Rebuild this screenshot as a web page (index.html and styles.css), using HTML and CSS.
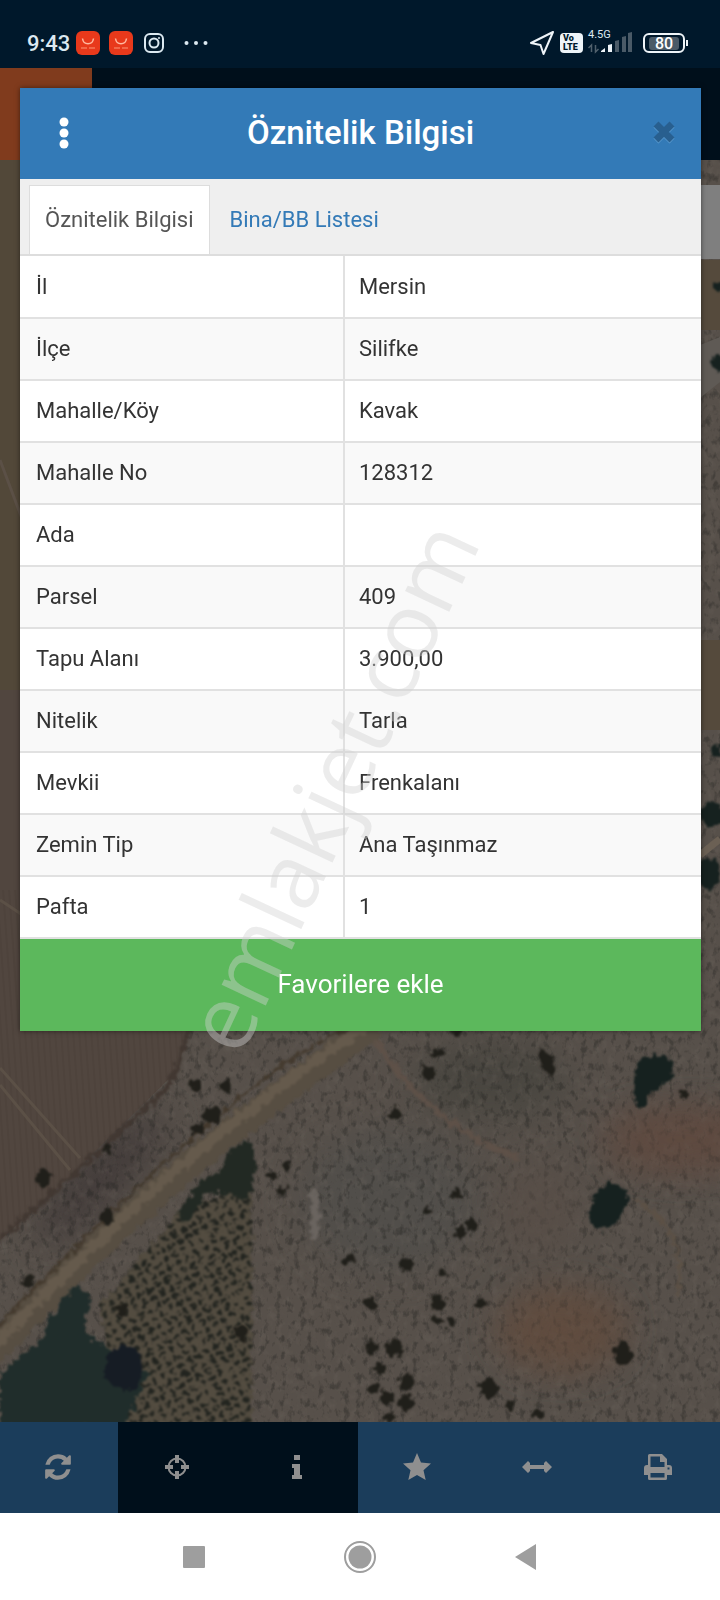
FILE: index.html
```html
<!DOCTYPE html>
<html lang="tr">
<head>
    <meta charset="UTF-8">
    <meta name="viewport" content="width=device-width, initial-scale=1.0">
    <title>Öznitelik Bilgisi</title>
    <link rel="stylesheet" href="styles.css">
</head>
<body>
    <div class="status-bar">
        <div class="status-left">
            <span class="clock">9:43</span>
            <svg class="app-icon" viewBox="0 0 24 24" width="24" height="24">
                <rect width="24" height="24" rx="6" fill="#e8391b"/>
                <path d="M6.500 7.500c1 7 10 7 11 0" fill="none" stroke="#ffb9a0" stroke-width="1.500"/>
                <path d="M5 17h6M13 17h6" stroke="#f5785a" stroke-width="1.500"/>
            </svg>
            <svg class="app-icon" viewBox="0 0 24 24" width="24" height="24">
                <rect width="24" height="24" rx="6" fill="#e8391b"/>
                <path d="M6.500 7.500c1 7 10 7 11 0" fill="none" stroke="#ffb9a0" stroke-width="1.500"/>
                <path d="M5 17h6M13 17h6" stroke="#f5785a" stroke-width="1.500"/>
            </svg>
            <svg class="camera-icon" viewBox="0 0 20 20" width="20" height="20" fill="none" stroke="#dce9f1" stroke-width="2">
                <rect x="1" y="1" width="18" height="18" rx="5"/>
                <circle cx="10" cy="10" r="4.500"/>
                <circle cx="15" cy="5" r="1" fill="#dce9f1" stroke="none"/>
            </svg>
            <svg class="dots-icon" viewBox="0 0 24 6" width="24" height="6" fill="#dce9f1">
                <circle cx="2.500" cy="3" r="2"/><circle cx="12" cy="3" r="2"/><circle cx="21.500" cy="3" r="2"/>
            </svg>
        </div>
        <div class="status-right">
            <svg viewBox="0 0 26 26" width="26" height="26" fill="none" stroke="#eef4f8" stroke-width="2" stroke-linejoin="round">
                <path d="M24 2L2 13l9.500 2 3 9z"/>
            </svg>
            <div class="volte"><span>Vo</span><span>LTE</span></div>
            <div class="signal">
                <span class="network">4.5G</span>
                <svg viewBox="0 0 46 22" width="46" height="22">
                    <path d="M3.500 20v-7l-3 3M7.500 13v7l3-3" fill="none" stroke="#51616d" stroke-width="1.500"/>
                    <path d="M13 20h4v-4l-4 3zM20 20h4v-8l-4 1z" fill="#eef4f8"/>
                    <path d="M27 20h4V8l-4 1zM34 20h4V4l-4 1zM40 20h4V0l-4 1z" fill="#4a5a67"/>
                </svg>
            </div>
            <div class="battery"><span>80</span></div>
        </div>
    </div>

    <div class="app">
        <header class="app-header"><div class="menu-tile"></div></header>

        <main class="map">
            <svg class="map-image" viewBox="0 160 720 1262" preserveAspectRatio="xMidYMax slice" color-interpolation-filters="sRGB">
                <defs>
                    <filter id="speckle" x="0" y="0" width="1" height="1">
                        <feTurbulence type="fractalNoise" baseFrequency="0.16 0.11" numOctaves="3" seed="8"/>
                        <feColorMatrix values="0 0 0 0 .14  0 0 0 0 .14  0 0 0 0 .13  4 0 0 0 -2.100"/>
                    </filter>
                    <filter id="haze" x="0" y="0" width="1" height="1">
                        <feTurbulence type="fractalNoise" baseFrequency="0.12 0.09" numOctaves="3" seed="3"/>
                        <feColorMatrix values="0 0 0 0 .46  0 0 0 0 .43  0 0 0 0 .4  0 3 0 0 -1.400"/>
                    </filter>
                    <filter id="rough" x="-.2" y="-.2" width="1.400" height="1.400">
                        <feTurbulence type="fractalNoise" baseFrequency="0.15" numOctaves="2" seed="5"/>
                        <feDisplacementMap in="SourceGraphic" scale="12" xChannelSelector="R" yChannelSelector="G"/>
                        <feGaussianBlur stdDeviation="1.200"/>
                    </filter>
                    <filter id="soft" x="-.5" y="-.5" width="2" height="2">
                        <feGaussianBlur stdDeviation="18"/>
                    </filter>
                    <pattern id="furrows" width="6" height="6" patternUnits="userSpaceOnUse" patternTransform="rotate(-4)">
                        <path d="M1 0v6" stroke="#463c35" stroke-width="1.500"/>
                    </pattern>
                    <pattern id="orchard" width="10" height="9" patternUnits="userSpaceOnUse" patternTransform="rotate(-30)">
                        <ellipse cx="4" cy="4" rx="3" ry="2.800" fill="#1c1f1b"/>
                    </pattern>
                </defs>
                <rect y="160" width="720" height="1262" fill="#57504a"/>
                <!-- soil patches -->
                <g filter="url(#soft)">
                    <ellipse cx="560" cy="1330" rx="60" ry="36" fill="#604c3f"/>
                    <ellipse cx="690" cy="1140" rx="80" ry="26" fill="#604a40"/>
                    <ellipse cx="390" cy="1200" rx="90" ry="70" fill="#514e4a"/>
                    <ellipse cx="100" cy="1180" rx="90" ry="22" fill="#403938" transform="rotate(-45 100 1180)"/>
                    <ellipse cx="490" cy="1080" rx="80" ry="40" fill="#494640"/>
                </g>
                <rect y="160" width="720" height="1262" filter="url(#haze)" opacity=".2"/>
                <rect y="160" width="720" height="1262" filter="url(#speckle)" opacity=".38"/>
                <!-- calmer ground between the shrubs -->
                <g filter="url(#soft)" opacity=".6">
                    <ellipse cx="565" cy="1330" rx="60" ry="40" fill="#604c3f"/>
                    <ellipse cx="680" cy="1140" rx="80" ry="30" fill="#5e4a40"/>
                    <ellipse cx="540" cy="1210" rx="40" ry="50" fill="#584d46"/>
                </g>
                <!-- fields -->
                <path d="M0 160h30v530H0z" fill="#524839"/>
                <path d="M0 690h30v330h160l-12 50-110 108L0 1240z" fill="#51463f"/>
                <path d="M0 890h30v130h160l-12 50-110 108L0 1240z" fill="url(#furrows)" opacity=".45"/>
                <path d="M0 460l30 80M0 900l30 20M0 1068l80 90M0 1085l70 85" stroke="#5b5046" stroke-width="3" fill="none"/>
                <path d="M700 260h20v70h-20zM700 640h20v90h-20z" fill="#554a3c"/>
                <path d="M700 345l20-8v45l-20 16z" fill="#5f5a55"/>
                <path d="M700 855l20-16" stroke="#6b6054" stroke-width="7"/>
                <!-- tracks -->
                <g fill="none" filter="url(#rough)">
                    <path d="M190 1020q-10 60-40 85L0 1240" stroke="#423832" stroke-width="5"/>
                    <path d="M-10 1354Q140 1200 235 1128T375 1025" stroke="#574e42" stroke-width="27"/>
                    <path d="M-10 1350Q135 1199 230 1125T368 1025" stroke="#655a4c" stroke-width="11"/>
                    <path d="M-10 1335Q125 1193 222 1113T350 1030" stroke="#443a2e" stroke-width="3"/>
                    <path d="M375 1040q40 60 80 85t65 34" stroke="#5e5148" stroke-width="6"/>
                    <path d="M635 1200q55 30 42 95" stroke="#5c5146" stroke-width="4"/>
                    <path d="M312 1190q6 20 2 50" stroke="#6a645f" stroke-width="8"/>
                </g>
                <!-- orchard and wood -->
                <g filter="url(#rough)">
                    <path d="M178 1212l74-28v248H120l-20-126z" fill="#534c40"/>
                    <path d="M178 1212l74-28v248H120l-20-126z" fill="url(#orchard)" opacity=".9"/>
                    <path d="M178 1215l22-34 20-8 6-18 18-15 12 10-2 32-10 20-12-8-25-2-14 22-8 10z" fill="#222923"/>
                    <path d="M0 1372l18-12 22-20 22-42 16-14 12 12-6 36 34 24 32 16-26 54H0z" fill="#202d2b"/>
                    <ellipse cx="124" cy="1368" rx="19" ry="22" fill="#161c24"/>
                </g>
                <!-- single trees -->
                <g fill="#201f1a" filter="url(#rough)">
                    <circle cx="197" cy="1085" r="6"/><circle cx="225" cy="1086" r="6"/>
                    <ellipse cx="211" cy="1115" rx="11" ry="8"/><circle cx="197" cy="1129" r="6"/>
                    <circle cx="107" cy="1147" r="5"/><circle cx="44" cy="1179" r="8"/>
                    <circle cx="106" cy="1217" r="7"/><circle cx="28" cy="1282" r="6"/>
                    <circle cx="272" cy="1176" r="5"/><circle cx="282" cy="1190" r="5"/><circle cx="287" cy="1167" r="5"/>
                    <circle cx="241" cy="1333" r="7"/><circle cx="122" cy="1310" r="7"/>
                    <circle cx="429" cy="1073" r="7"/><circle cx="438" cy="1053" r="5"/><circle cx="395" cy="1113" r="6"/>
                    <path d="M538 1048l14 8 5 16-6 5-10-12z"/>
                    <circle cx="349" cy="1260" r="6"/><circle cx="406" cy="1265" r="7"/><circle cx="370" cy="1302" r="6"/>
                    <circle cx="461" cy="1233" r="6"/><circle cx="472" cy="1223" r="5"/><circle cx="427" cy="1211" r="5"/>
                    <circle cx="456" cy="1194" r="5"/><circle cx="438" cy="1303" r="8"/><circle cx="436" cy="1320" r="5"/>
                    <circle cx="452" cy="1323" r="5"/><circle cx="480" cy="1304" r="5"/><circle cx="442" cy="1272" r="4"/>
                    <circle cx="372" cy="1347" r="7"/><circle cx="394" cy="1348" r="9"/><circle cx="380" cy="1368" r="6"/>
                    <circle cx="374" cy="1388" r="6"/><circle cx="406" cy="1382" r="8"/><circle cx="387" cy="1398" r="7"/>
                    <circle cx="406" cy="1403" r="8"/><circle cx="390" cy="1417" r="5"/><circle cx="489" cy="1388" r="10"/>
                    <circle cx="623" cy="1353" r="10"/><circle cx="537" cy="1413" r="5"/><circle cx="510" cy="1405" r="5"/>
                    <circle cx="684" cy="1095" r="5"/><circle cx="457" cy="1032" r="5"/>
                    <g fill="#16211f">
                        <path d="M636 1066l8-9 10-4 16 4 4 12-4 10-12 9-8 2-2 14-10 6-4-10z"/>
                        <path d="M592 1200l8-12 12-5 14 6 2 12-6 14-12 10-10 6-12-12z"/>
                        <ellipse cx="712" cy="814" rx="12" ry="13"/><ellipse cx="708" cy="874" rx="12" ry="16"/>
                        <ellipse cx="718" cy="286" rx="5" ry="5"/><ellipse cx="718" cy="364" rx="7" ry="8"/>
                        <ellipse cx="716" cy="750" rx="6" ry="6"/>
                    </g>
                </g>
            </svg>
            <div class="map-control"></div>
        </main>

        <nav class="toolbar">
            <button type="button" aria-label="Yenile">
                <svg viewBox="0 0 1792 1792" width="30" height="30"><path d="M1639 1056q0 5-1 7-64 268-268 434.500t-478 166.500q-146 0-282.500-55t-243.500-157l-129 129q-19 19-45 19t-45-19-19-45v-448q0-26 19-45t45-19h448q26 0 45 19t19 45-19 45l-137 137q71 66 161 102t187 36q134 0 250-65t186-179q11-17 53-117 8-23 30-23h192q13 0 22.500 9.500t9.500 22.500zm25-800v448q0 26-19 45t-45 19h-448q-26 0-45-19t-19-45 19-45l138-138q-148-137-349-137-134 0-250 65t-186 179q-11 17-53 117-8 23-30 23h-199q-13 0-22.500-9.500t-9.500-22.500v-7q65-268 270-434.500t480-166.500q146 0 284 55.500t245 156.500l130-129q19-19 45-19t45 19 19 45z"/></svg>
            </button>
            <button type="button" class="active" aria-label="Konum">
                <svg viewBox="0 0 26 26" width="26" height="26"><circle cx="13" cy="13" r="8.500" fill="none" stroke="#8f8f8f" stroke-width="2"/><path d="M11 1h4v8h-4zM11 17h4v8h-4zM1 11h8v4H1zM17 11h8v4h-8z"/></svg>
            </button>
            <button type="button" class="active" aria-label="Bilgi">
                <svg viewBox="0 0 12 24" width="12" height="24"><path d="M3 0h6v5H3zM1 9h8v11h2v4H1v-4h2v-7H1z"/></svg>
            </button>
            <button type="button" aria-label="Favoriler">
                <svg viewBox="0 0 28 28" width="28" height="28"><path d="M14 0l4 9.500 10 1-7.500 6.800L22.700 27 14 22 5.300 27l2.200-9.700L0 10.500l10-1z"/></svg>
            </button>
            <button type="button" aria-label="Ölçüm">
                <svg viewBox="0 0 30 12" width="30" height="12"><path d="M0 6l6-6 2 2v2h14V2l2-2 6 6-6 6-2-2V8H8v2l-2 2z"/></svg>
            </button>
            <button type="button" aria-label="Yazdır">
                <svg viewBox="0 0 28 26" width="28" height="26"><path fill-rule="evenodd" d="M4 11V1.500Q4 0 5.500 0H18l5 5v6h2q3 0 3 3v7h-5v3.500q0 1.500-1.500 1.500h-16Q4 26 4 24.500V21H0v-7q0-3 3-3zM6.500 2.500V13h14V8H16V2.500zM6.500 19v4.500h14V19zM23.500 13.500v2h2v-2z"/></svg>
            </button>
        </nav>

        <section class="modal" role="dialog" aria-labelledby="modalTitle">
            <div class="modal-header">
                <button type="button" class="menu-btn" aria-label="Menü">
                    <svg viewBox="0 0 10 32" width="10" height="32"><circle cx="5" cy="5" r="4.500"/><circle cx="5" cy="16" r="4.500"/><circle cx="5" cy="27" r="4.500"/></svg>
                </button>
                <h1 id="modalTitle">Öznitelik Bilgisi</h1>
                <button type="button" class="close-btn" aria-label="Kapat">
                    <svg viewBox="0 0 24 25" width="24" height="25">
                        <path d="M4 5l16 16M20 5L4 21" stroke="#5a9bd0" stroke-width="7"/>
                        <path d="M4 4l16 16M20 4L4 20" stroke="#285f8f" stroke-width="7"/>
                    </svg>
                </button>
            </div>
            <div class="tabs">
                <a href="#oznitelik" class="tab selected">Öznitelik Bilgisi</a>
                <a href="#bina" class="tab">Bina/BB Listesi</a>
            </div>
            <table class="info" id="oznitelik">
                <tr><th scope="row">İl</th><td>Mersin</td></tr>
                <tr><th scope="row">İlçe</th><td>Silifke</td></tr>
                <tr><th scope="row">Mahalle/Köy</th><td>Kavak</td></tr>
                <tr><th scope="row">Mahalle No</th><td>128312</td></tr>
                <tr><th scope="row">Ada</th><td></td></tr>
                <tr><th scope="row">Parsel</th><td>409</td></tr>
                <tr><th scope="row">Tapu Alanı</th><td>3.900,00</td></tr>
                <tr><th scope="row">Nitelik</th><td>Tarla</td></tr>
                <tr><th scope="row">Mevkii</th><td>Frenkalanı</td></tr>
                <tr><th scope="row">Zemin Tip</th><td>Ana Taşınmaz</td></tr>
                <tr><th scope="row">Pafta</th><td>1</td></tr>
            </table>
            <button type="button" class="favorite-btn">Favorilere ekle</button>
            <div class="watermark">emlakjet.com</div>
        </section>
    </div>

    <nav class="system-nav">
        <button type="button" aria-label="Son uygulamalar"><svg viewBox="0 0 22 22" width="22" height="22"><rect width="22" height="22" rx="1"/></svg></button>
        <button type="button" aria-label="Ana ekran"><svg viewBox="0 0 32 32" width="32" height="32"><circle cx="16" cy="16" r="15" fill="none" stroke="#9e9e9e" stroke-width="2"/><circle cx="16" cy="16" r="11.500"/></svg></button>
        <button type="button" aria-label="Geri"><svg viewBox="0 0 22 26" width="22" height="26"><path d="M0 13L21 0v26z"/></svg></button>
    </nav>
</body>
</html>
```
FILE: styles.css
```css
* {
    box-sizing: border-box;
}
body {
    margin: 0;
    min-height: 100vh;
    display: flex;
    flex-direction: column;
    font-family: Roboto, "Liberation Sans", sans-serif;
    font-size: 22px;
    color: #333;
    background-color: #fff;
}
button {
    display: flex;
    align-items: center;
    justify-content: center;
    padding: 0;
    border: none;
    background: none;
    font-family: inherit;
    cursor: pointer;
}
svg {
    display: block;
}

/* phone status bar */
.status-bar {
    display: flex;
    align-items: center;
    justify-content: space-between;
    height: 68px;
    padding: 18px 35px 0 27px;
    background-color: #00182b;
    color: #dce9f1;
}
.status-left, .status-right {
    display: flex;
    align-items: center;
}
.clock {
    font-weight: 500;
    margin-right: 6px;
}
.app-icon {
    margin-right: 9px;
}
.camera-icon {
    margin: 0 20px 0 2px;
}
.status-right {
    gap: 5px;
}
.volte {
    display: flex;
    flex-direction: column;
    width: 23px;
    height: 20px;
    padding: 1px 3px;
    border-radius: 4px;
    background-color: #eef4f8;
    color: #00182b;
    font-size: 9px;
    font-weight: 900;
    line-height: 9px;
}
.signal {
    position: relative;
    margin-right: 4px;
}
.network {
    position: absolute;
    top: -3px;
    left: 0;
    font-size: 11px;
    line-height: 12px;
}
.battery {
    position: relative;
    width: 42px;
    height: 20px;
    padding: 2px 4px;
    border: 2px solid #eef4f8;
    border-radius: 6px;
}
.battery::after {
    content: "";
    position: absolute;
    top: 5px;
    right: -5px;
    width: 2px;
    height: 6px;
    background-color: #eef4f8;
}
.battery span {
    display: block;
    border-radius: 3px;
    background-color: #4a5a67;
    color: #fff;
    font-size: 16px;
    font-weight: 500;
    line-height: 13px;
    text-align: center;
}

/* map screen under the dialog */
.app {
    position: relative;
    flex: 1;
    display: flex;
    flex-direction: column;
}
.app-header {
    height: 92px;
    background-color: #000f1b;
}
.menu-tile {
    width: 92px;
    height: 92px;
    background-color: #803b1d;
}
.map {
    position: relative;
    flex: 1;
    overflow: hidden;
    background-color: #5a524b;
}
.map-image {
    position: absolute;
    width: 100%;
    height: 100%;
}
.map-control {
    position: absolute;
    top: 25px;
    right: 0;
    width: 60px;
    height: 74px;
    background-color: #7f7f7f;
}
.toolbar {
    display: grid;
    grid-template-columns: 118px repeat(4, 1fr) 122px;
    height: 91px;
    background-color: #1b3d5b;
}
.toolbar button {
    padding: 0 2px 2px 0;
}
.toolbar .active {
    background-color: #000f1b;
}
.toolbar svg {
    fill: #8f8f8f;
}

/* dialog */
.modal {
    position: absolute;
    top: 20px;
    left: 20px;
    right: 19px;
    box-shadow: 0 0 5px rgba(0,0,0,0.5);
    background-color: #fff;
}
.modal-header {
    display: grid;
    grid-template-columns: 1fr auto 1fr;
    align-items: center;
    height: 91px;
    padding: 0 25px 2px;
    background-color: #337ab7;
    color: #fff;
}
.modal-header h1 {
    margin: 0;
    font-size: 33px;
    font-weight: 500;
}
.menu-btn {
    width: 38px;
    height: 48px;
}
.menu-btn svg {
    fill: #fff;
}
.close-btn {
    justify-self: end;
    width: 24px;
    height: 48px;
}
.tabs {
    display: flex;
    height: 77px;
    padding: 6px 9px 0;
    border-bottom: 2px solid #ddd;
    background-color: #efefef;
}
.tab {
    padding: 0 15px;
    border: 1px solid transparent;
    border-bottom: none;
    margin-right: 4px;
    line-height: 68px;
    color: #337ab7;
    text-decoration: none;
}
.tab.selected {
    border-color: #ddd;
    background-color: #fff;
    color: #555;
}
.info {
    width: 100%;
    border-collapse: collapse;
    table-layout: fixed;
}
.info th, .info td {
    height: 62px;
    padding: 0 15px 1px;
    border-bottom: 2px solid #e1e1e1;
    font-weight: 400;
    text-align: left;
}
.info th {
    width: 324px;
    padding-left: 16px;
    border-right: 2px solid #e1e1e1;
}
.info td {
    padding-left: 14px;
}
.info tr:nth-child(even) {
    background-color: #f9f9f9;
}
.favorite-btn {
    width: 100%;
    height: 92px;
    padding-bottom: 2px;
    background-color: #5cb85c;
    color: #fff;
    font-size: 26px;
}
.watermark {
    position: absolute;
    top: 50%;
    left: 50%;
    font-family: "Open Sans", "Noto Sans", sans-serif;
    font-size: 91px;
    line-height: 1;
    color: rgba(210,210,210,0.42);
    transform: translate(-50%, -50%) translate(-31px, 226px) rotate(-65deg);
    pointer-events: none;
}

/* phone navigation */
.system-nav {
    display: flex;
    align-items: center;
    justify-content: center;
    gap: 106px;
    height: 87px;
}
.system-nav button {
    width: 60px;
    height: 60px;
}
.system-nav svg {
    fill: #9e9e9e;
}
```
